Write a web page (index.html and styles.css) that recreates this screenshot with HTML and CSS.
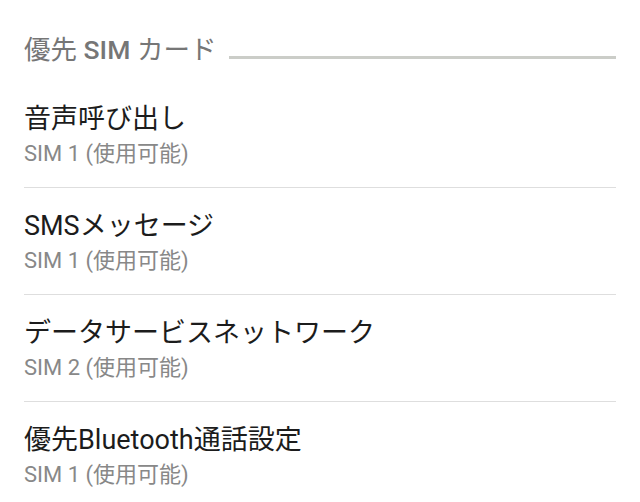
FILE: index.html
```html
<!DOCTYPE html>
<html lang="ja">
<head>
<meta charset="utf-8">
<link rel="stylesheet" href="styles.css">
</head>
<body>
<div class="page">
  <div class="section-header">
    <span class="section-title">優先 <b class="sim">SIM</b> カード</span>
    <span class="section-rule"></span>
  </div>
  <div class="item">
    <div class="item-title">音声呼び出し</div>
    <div class="item-sub">SIM 1 (使用可能)</div>
  </div>
  <div class="item">
    <div class="item-title">SMSメッセージ</div>
    <div class="item-sub">SIM 1 (使用可能)</div>
  </div>
  <div class="item">
    <div class="item-title">データサービスネットワーク</div>
    <div class="item-sub">SIM 2 (使用可能)</div>
  </div>
  <div class="item last">
    <div class="item-title">優先Bluetooth通話設定</div>
    <div class="item-sub">SIM 1 (使用可能)</div>
  </div>
</div>
</body>
</html>
```
FILE: styles.css
```css
html, body {
  margin: 0;
  padding: 0;
  background: #ffffff;
}
body {
  width: 640px;
  height: 502px;
  overflow: hidden;
  font-family: "Roboto", "Noto Sans CJK JP", sans-serif;
}
.page {
  padding: 0 24px;
}
.section-header {
  height: 81px;
  display: flex;
  align-items: flex-end;
  gap: 13px;
  box-sizing: border-box;
  padding-bottom: 15px;
}
.section-title {
  font-size: 26.5px;
  line-height: 32px;
  color: #767676;
  white-space: nowrap;
}
.sim {
  font-weight: 500;
}
.section-rule {
  flex: 1;
  height: 3px;
  background: #cbcdc8;
  margin-bottom: 7px;
}
.item {
  height: 107px;
  box-sizing: border-box;
  padding-top: 22px;
  border-bottom: 1px solid #dedede;
}
.item.last {
  border-bottom: none;
}
.item-title {
  font-size: 27px;
  line-height: 32px;
  color: #1c1c1c;
}
.item-sub {
  font-size: 22px;
  line-height: 28px;
  margin-top: 5px;
  color: #888888;
}
```
